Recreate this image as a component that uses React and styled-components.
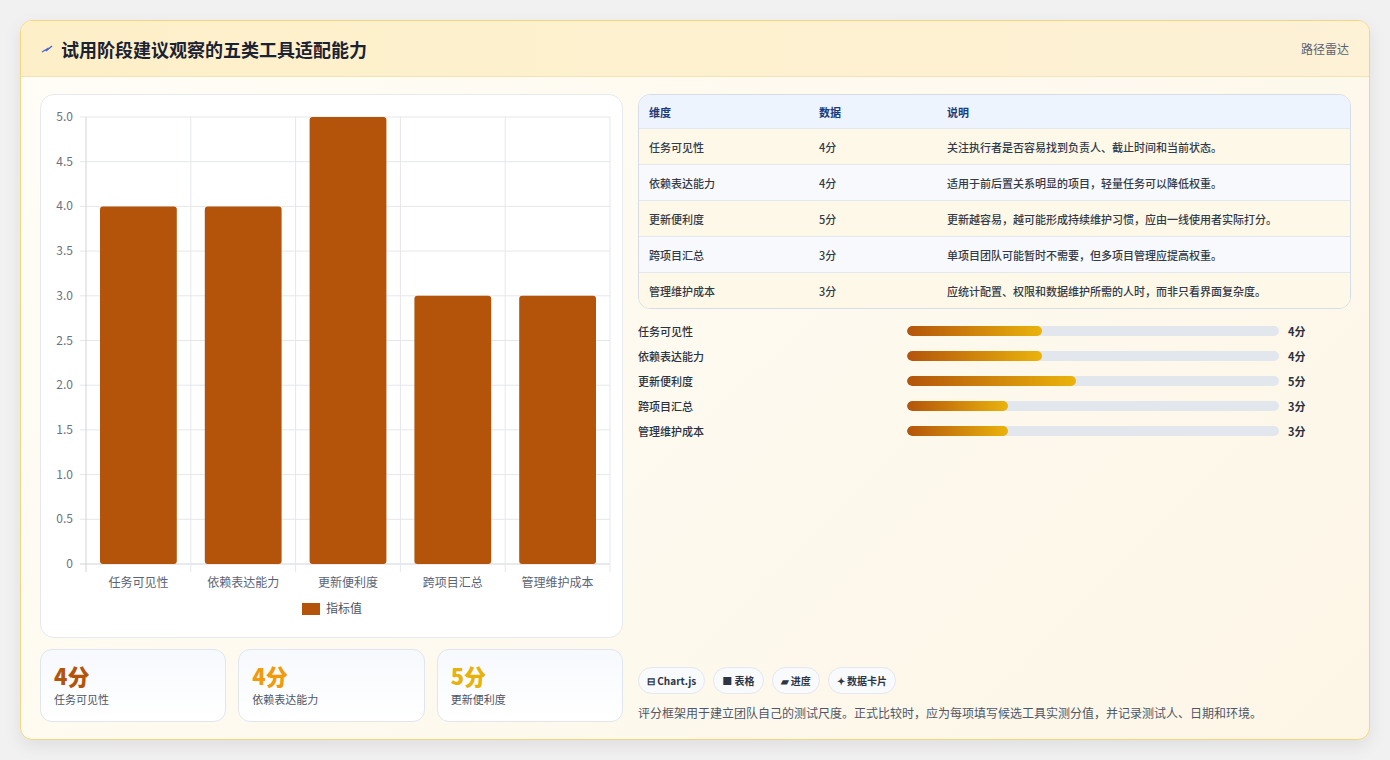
import styled, { createGlobalStyle } from "styled-components";

const Global = createGlobalStyle`
  body { margin: 0; background: #f1f1f1; font-family: "Noto Sans CJK SC", "Noto Sans", sans-serif; }
`;

const Page = styled.div`
  padding: 20px 20px 20px 20px;
  height: 760px;
  box-sizing: border-box;
`;

const Frame = styled.div`
  width: 1350px;
  height: 720px;
  box-sizing: border-box;
  border: 1px solid #f2d682;
  border-radius: 12px;
  background: linear-gradient(135deg, #fffdf6 0%, #fdf6e7 100%);
  box-shadow: 0 6px 18px rgba(0,0,0,0.08);
  overflow: hidden;
  display: flex;
  flex-direction: column;
`;

const Header = styled.div`
  height: 55px;
  flex: none;
  display: flex;
  align-items: center;
  justify-content: space-between;
  padding: 0 20px;
  background: linear-gradient(90deg, #fdf0c8, #fdf1d6);
  border-bottom: 1px solid #f2e2b6;
`;

const Title = styled.h1`
  margin: 0;
  font-size: 18px;
  font-weight: 700;
  color: #1b2233;
  display: flex;
  align-items: center;
  gap: 8px;
`;

const Tag = styled.span`
  font-size: 12px;
  color: #5a6272;
`;

const Body = styled.div`
  flex: 1;
  display: grid;
  grid-template-columns: 583px 713px;
  gap: 15px;
  padding: 17px 19px 18px 19px;
`;

const Col = styled.div`
  display: flex;
  flex-direction: column;
  gap: 11px;
`;

const ChartCard = styled.div`
  height: 544px;
  box-sizing: border-box;
  background: #fff;
  border: 1px solid #e6e9ef;
  border-radius: 14px;
`;

const Stats = styled.div`
  display: grid;
  grid-template-columns: repeat(3, 1fr);
  gap: 12px;
`;

const Stat = styled.div`
  height: 73px;
  box-sizing: border-box;
  border: 1px solid #dfe6f0;
  border-radius: 12px;
  background: linear-gradient(180deg, #f6f9fd, #ffffff);
  padding: 10px 13px;
`;

const StatValue = styled.div`
  font-size: 22px;
  font-weight: 800;
  line-height: 30px;
  color: ${(p) => p.color};
`;

const StatLabel = styled.div`
  font-size: 11px;
  color: #4c5566;
  margin-top: 1px;
`;

const Table = styled.div`
  border: 1px solid #d7dde8;
  border-radius: 12px;
  overflow: hidden;
`;

const Row = styled.div`
  display: grid;
  grid-template-columns: 170px 128px 1fr;
  height: ${(p) => (p.head ? 33 : 35)}px;
  align-items: center;
  padding: 0 10px;
  font-size: 11px;
  font-weight: ${(p) => (p.head ? 700 : 500)};
  color: ${(p) => (p.head ? "#1c3a7a" : "#333a48")};
  background: ${(p) => (p.head ? "#edf4fe" : p.alt ? "#f7f9fc" : "#fdf8e8")};
  border-top: ${(p) => (p.head ? "none" : "1px solid #e3e8f0")};
`;

const Bars = styled.div`
  display: flex;
  flex-direction: column;
  gap: 9px;
  margin-top: 3px;
`;

const BarRow = styled.div`
  display: grid;
  grid-template-columns: 269px 372px 1fr;
  gap: 0;
  align-items: center;
  height: 16px;
  font-size: 11px;
  color: #2a3140;
  font-weight: 500;
`;

const Track = styled.div`
  height: 10px;
  border-radius: 5px;
  background: #e2e7ee;
  overflow: hidden;
`;

const Fill = styled.div`
  height: 100%;
  border-radius: 5px;
  background: linear-gradient(90deg, #b4540b, #eab30c);
`;

const BarVal = styled.span`
  padding-left: 9px;
  font-weight: 700;
`;

const Spacer = styled.div`
  flex: 1;
`;

const Chips = styled.div`
  display: flex;
  gap: 8px;
`;

const Chip = styled.span`
  height: 27px;
  box-sizing: border-box;
  padding: 0 8px;
  display: inline-flex;
  align-items: center;
  gap: 4px;
  border: 1px solid #e3e7ee;
  border-radius: 14px;
  background: #f8fafc;
  font-size: 10px;
  font-weight: 700;
  color: #2d3545;
`;

const Note = styled.p`
  margin: 10px 0 1px;
  font-size: 12px;
  color: #4e5668;
`;

const rows = [
  ["任务可见性", 4, "关注执行者是否容易找到负责人、截止时间和当前状态。"],
  ["依赖表达能力", 4, "适用于前后置关系明显的项目，轻量任务可以降低权重。"],
  ["更新便利度", 5, "更新越容易，越可能形成持续维护习惯，应由一线使用者实际打分。"],
  ["跨项目汇总", 3, "单项目团队可能暂时不需要，但多项目管理应提高权重。"],
  ["管理维护成本", 3, "应统计配置、权限和数据维护所需的人时，而非只看界面复杂度。"],
];

function Chart() {
  const x0 = 45, x1 = 569, y0 = 22, y1 = 469;
  const step = (x1 - x0) / 5;
  const ticks = [0, 0.5, 1, 1.5, 2, 2.5, 3, 3.5, 4, 4.5, 5];
  const yOf = (v) => y1 - (v / 5) * (y1 - y0);
  return (
    <svg width="581" height="542" style={{ display: "block" }} fontFamily="Noto Sans CJK SC, sans-serif">
      {ticks.map((t) => (
        <g key={t}>
          <line x1={x0 - 6} x2={x1} y1={yOf(t)} y2={yOf(t)} stroke={t === 0 ? "#cfd4dc" : "#e5e7eb"} />
          <text x={x0 - 13} y={yOf(t) + 4} fontSize="12" fill="#6b7280" textAnchor="end">
            {t === 0 ? "0" : t.toFixed(1)}
          </text>
        </g>
      ))}
      {[0, 1, 2, 3, 4, 5].map((i) => (
        <line key={i} x1={x0 + i * step} x2={x0 + i * step} y1={y0} y2={y1 + 8} stroke={i === 0 ? "#cfd4dc" : "#e5e7eb"} />
      ))}
      {rows.map(([n, v], i) => (
        <g key={n}>
          <rect x={x0 + i * step + 14} y={yOf(v)} width={step - 28} height={y1 - yOf(v)} rx="3" fill="#b4540b" />
          <text x={x0 + i * step + step / 2} y={492} fontSize="12" fill="#5b6475" textAnchor="middle">{n}</text>
        </g>
      ))}
      <rect x="261" y="508" width="18" height="12" fill="#b4540b" />
      <text x="285" y="518" fontSize="12" fill="#4b5563">指标值</text>
    </svg>
  );
}

export default function App() {
  return (
    <Page>
      <Global />
      <Frame>
        <Header>
          <Title>
            <svg width="12" height="10" viewBox="0 0 12 10"><path d="M1 8 L6 5 L5 7 L11 2" stroke="#4a63d8" strokeWidth="1.4" fill="none" /></svg>
            试用阶段建议观察的五类工具适配能力
          </Title>
          <Tag>路径雷达</Tag>
        </Header>
        <Body>
          <Col>
            <ChartCard><Chart /></ChartCard>
            <Stats>
              <Stat><StatValue color="#b4540b">4分</StatValue><StatLabel>任务可见性</StatLabel></Stat>
              <Stat><StatValue color="#f09a0c">4分</StatValue><StatLabel>依赖表达能力</StatLabel></Stat>
              <Stat><StatValue color="#e8b20c">5分</StatValue><StatLabel>更新便利度</StatLabel></Stat>
            </Stats>
          </Col>
          <Col>
            <Table>
              <Row head><span>维度</span><span>数据</span><span>说明</span></Row>
              {rows.map(([n, v, d], i) => (
                <Row key={n} alt={i % 2 === 1}><span>{n}</span><span>{v}分</span><span>{d}</span></Row>
              ))}
            </Table>
            <Bars>
              {rows.map(([n, v]) => (
                <BarRow key={n}>
                  <span>{n}</span>
                  <Track><Fill style={{ width: `${(v / 11) * 100}%` }} /></Track>
                  <BarVal>{v}分</BarVal>
                </BarRow>
              ))}
            </Bars>
            <Spacer />
            <div>
              <Chips>
                <Chip>⊟ Chart.js</Chip>
                <Chip>■ 表格</Chip>
                <Chip>▰ 进度</Chip>
                <Chip>✦ 数据卡片</Chip>
              </Chips>
              <Note>评分框架用于建立团队自己的测试尺度。正式比较时，应为每项填写候选工具实测分值，并记录测试人、日期和环境。</Note>
            </div>
          </Col>
        </Body>
      </Frame>
    </Page>
  );
}
